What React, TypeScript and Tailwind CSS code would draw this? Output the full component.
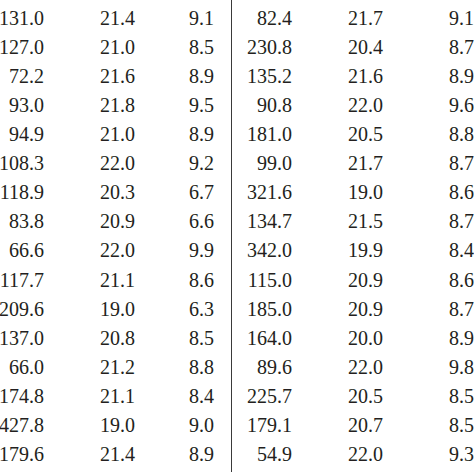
import React from "react";

const rows: string[][] = [
  ["131.0", "21.4", "9.1", "82.4", "21.7", "9.1"],
  ["127.0", "21.0", "8.5", "230.8", "20.4", "8.7"],
  ["72.2", "21.6", "8.9", "135.2", "21.6", "8.9"],
  ["93.0", "21.8", "9.5", "90.8", "22.0", "9.6"],
  ["94.9", "21.0", "8.9", "181.0", "20.5", "8.8"],
  ["108.3", "22.0", "9.2", "99.0", "21.7", "8.7"],
  ["118.9", "20.3", "6.7", "321.6", "19.0", "8.6"],
  ["83.8", "20.9", "6.6", "134.7", "21.5", "8.7"],
  ["66.6", "22.0", "9.9", "342.0", "19.9", "8.4"],
  ["117.7", "21.1", "8.6", "115.0", "20.9", "8.6"],
  ["209.6", "19.0", "6.3", "185.0", "20.9", "8.7"],
  ["137.0", "20.8", "8.5", "164.0", "20.0", "8.9"],
  ["66.0", "21.2", "8.8", "89.6", "22.0", "9.8"],
  ["174.8", "21.1", "8.4", "225.7", "20.5", "8.5"],
  ["427.8", "19.0", "9.0", "179.1", "20.7", "8.5"],
  ["179.6", "21.4", "8.9", "54.9", "22.0", "9.3"],
];

export default function App() {
  return (
    <div
      className="w-[474px] h-[474px] overflow-hidden bg-white text-[#231f20]"
      style={{ fontFamily: '"Liberation Serif", "Times New Roman", serif' }}
    >
      <div className="flex w-[480px]">
        <div className="w-[232px] h-[472px] border-r border-[#3a3a3a] pt-[3.7px] shrink-0">
          {rows.map((r, i) => (
            <div key={i} className="flex h-[29.1px] leading-[29.1px] text-[20px]">
              <div className="w-[44px] text-right whitespace-nowrap shrink-0 flex justify-end">{r[0]}</div>
              <div className="w-[91px] text-right shrink-0">{r[1]}</div>
              <div className="w-[79px] text-right shrink-0">{r[2]}</div>
            </div>
          ))}
        </div>
        <div className="pt-[3.7px] shrink-0">
          {rows.map((r, i) => (
            <div key={i} className="flex h-[29.1px] leading-[29.1px] text-[20px]">
              <div className="w-[60px] text-right shrink-0">{r[3]}</div>
              <div className="w-[91px] text-right shrink-0">{r[4]}</div>
              <div className="w-[91px] text-right shrink-0">{r[5]}</div>
            </div>
          ))}
        </div>
      </div>
    </div>
  );
}
